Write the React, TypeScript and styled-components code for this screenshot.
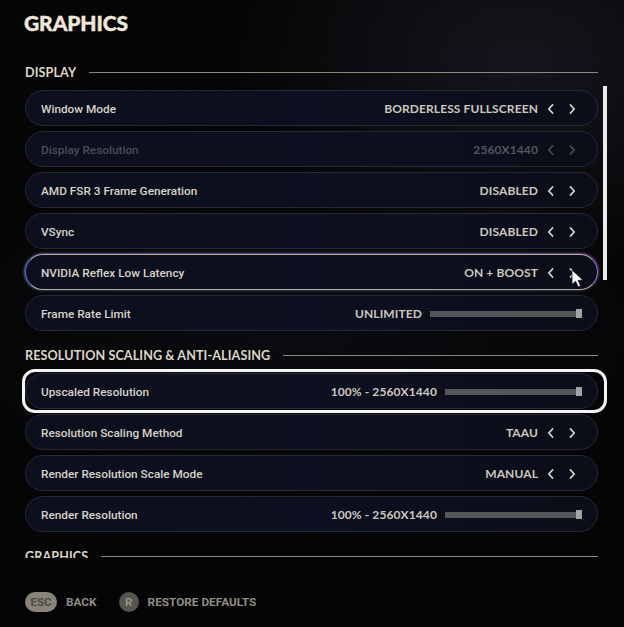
import React from "react";
import styled, { createGlobalStyle, css } from "styled-components";

const Global = createGlobalStyle`
  html, body { margin: 0; padding: 0; background: #050506; }
  * { box-sizing: border-box; }
`;

type RowData = {
  label: string;
  value: string;
  kind: "select" | "slider";
  disabled?: boolean;
  hovered?: boolean;
  focused?: boolean;
  barWidth?: number;
};

type SectionData = { title: string; rows: RowData[] };

const sections: SectionData[] = [
  {
    title: "DISPLAY",
    rows: [
      { label: "Window Mode", value: "BORDERLESS FULLSCREEN", kind: "select" },
      { label: "Display Resolution", value: "2560X1440", kind: "select", disabled: true },
      { label: "AMD FSR 3 Frame Generation", value: "DISABLED", kind: "select" },
      { label: "VSync", value: "DISABLED", kind: "select" },
      { label: "NVIDIA Reflex Low Latency", value: "ON + BOOST", kind: "select", hovered: true },
      { label: "Frame Rate Limit", value: "UNLIMITED", kind: "slider", barWidth: 152 },
    ],
  },
  {
    title: "RESOLUTION SCALING & ANTI-ALIASING",
    rows: [
      { label: "Upscaled Resolution", value: "100% - 2560X1440", kind: "slider", barWidth: 137, focused: true },
      { label: "Resolution Scaling Method", value: "TAAU", kind: "select" },
      { label: "Render Resolution Scale Mode", value: "MANUAL", kind: "select" },
      { label: "Render Resolution", value: "100% - 2560X1440", kind: "slider", barWidth: 137 },
    ],
  },
  { title: "GRAPHICS", rows: [] },
];

const Page = styled.div`
  width: 624px;
  height: 627px;
  overflow: hidden;
  display: flex;
  flex-direction: column;
  background:
    radial-gradient(ellipse 420px 300px at 520px 60px, rgba(34, 36, 46, 0.55), rgba(0, 0, 0, 0) 70%),
    radial-gradient(ellipse 500px 260px at 300px 330px, rgba(22, 24, 34, 0.35), rgba(0, 0, 0, 0) 75%),
    #050506;
`;

const Header = styled.header`
  height: 62px;
  padding: 10px 24px 0;
`;

const Title = styled.h1`
  margin: 0;
  font-family: "Lato", "Inter", sans-serif;
  font-weight: 900;
  font-size: 21px;
  line-height: 26px;
  letter-spacing: -0.1px;
  color: #efe8d8;
  -webkit-text-stroke: 0.4px #efe8d8;
`;

const ScrollArea = styled.div`
  position: relative;
  height: 496px;
  overflow: hidden;
  padding: 0 26px 0 25px;
  display: flex;
  flex-direction: column;
  gap: 14px;
`;

const Scrollbar = styled.div`
  position: absolute;
  left: 603px;
  top: 24px;
  width: 4px;
  height: 194px;
  background: #ececec;
`;

const Section = styled.section`
  display: flex;
  flex-direction: column;
  gap: 8px;
`;

const SectionHeader = styled.div`
  height: 20px;
  display: flex;
  align-items: center;
  gap: 13px;
`;

const SectionTitle = styled.h2`
  margin: 0;
  font-family: "Lato", sans-serif;
  font-weight: 700;
  font-size: 12.6px;
  letter-spacing: 0.1px;
  color: #ddd6c6;
  white-space: nowrap;
`;

const Rule = styled.div`
  flex: 1;
  height: 1px;
  background: #8e887c;
`;

const Rows = styled.div`
  display: flex;
  flex-direction: column;
  gap: 5px;
`;

const Row = styled.div<{ $hovered?: boolean; $focused?: boolean }>`
  position: relative;
  height: 36px;
  border-radius: 18px;
  border: 1px solid #262a37;
  background: linear-gradient(90deg, #0c0f1c 0%, #0d1020 50%, #0b0d18 100%);
  padding: 1px 18px 0 15px;
  display: flex;
  align-items: center;
  gap: 8px;
  ${(p) =>
    p.$hovered &&
    css`
      border: 1.5px solid #b8af9a;
      border-left-color: #6a5ae0;
      border-right-color: #8c7fb0;
      box-shadow:
        -1px 0 2px rgba(70, 210, 255, 0.55),
        1px -1px 2px rgba(190, 70, 255, 0.45),
        0 0 6px rgba(200, 190, 160, 0.15);
    `}
  ${(p) =>
    p.$focused &&
    css`
      &::after {
        content: "";
        position: absolute;
        top: -5px;
        bottom: -5px;
        left: -4px;
        right: -10px;
        border: 3px solid #f4f4f4;
        border-radius: 13px;
        pointer-events: none;
      }
    `}
`;

const Label = styled.span<{ $disabled?: boolean }>`
  flex: 1;
  font-family: "Roboto", sans-serif;
  font-weight: 500;
  font-size: 11.8px;
  letter-spacing: 0;
  color: ${(p) => (p.$disabled ? "#4c4d55" : "#d8d3c8")};
`;

const Value = styled.span<{ $disabled?: boolean }>`
  font-family: "Lato", sans-serif;
  font-weight: 700;
  font-size: 12px;
  letter-spacing: 0.1px;
  color: ${(p) => (p.$disabled ? "#54555d" : "#cdc8be")};
  white-space: nowrap;
`;

const Arrows = styled.div`
  display: flex;
  align-items: center;
  gap: 8px;
  margin-left: -3px;
`;

const ArrowButton = styled.span<{ $disabled?: boolean }>`
  width: 14px;
  height: 14px;
  display: flex;
  align-items: center;
  justify-content: center;
  color: ${(p) => (p.$disabled ? "#4a4b53" : "#dcd7cc")};
`;

const Track = styled.div`
  position: relative;
  height: 6px;
  background: #55565a;
  margin-right: -3px;
`;

const Knob = styled.div`
  position: absolute;
  right: 0;
  top: -1.5px;
  width: 6px;
  height: 9px;
  background: #a3a3a3;
`;

const Cursor = styled.svg`
  position: absolute;
  left: 545px;
  top: 14px;
  width: 14px;
  height: 19px;
`;

const Footer = styled.footer`
  padding: 34px 25px 0;
  display: flex;
  align-items: center;
  gap: 22px;
`;

const Hint = styled.div`
  display: flex;
  align-items: center;
  gap: 9px;
`;

const KeyCap = styled.span<{ $round?: boolean }>`
  height: 20px;
  min-width: ${(p) => (p.$round ? "20px" : "32px")};
  padding: 0 ${(p) => (p.$round ? "0" : "5px")};
  border-radius: 10px;
  display: inline-flex;
  align-items: center;
  justify-content: center;
  font-family: "Roboto", sans-serif;
  font-weight: 700;
  font-size: 11.5px;
  background: ${(p) => (p.$round ? "#57544f" : "#87827a")};
  color: ${(p) => (p.$round ? "#96918a" : "#4f4c47")};
`;

const HintText = styled.span`
  font-family: "Roboto", sans-serif;
  font-weight: 700;
  font-size: 11.8px;
  letter-spacing: 0;
  color: #8f8b84;
`;

const Chevron = ({ dir }: { dir: "left" | "right" }) => (
  <svg width="7" height="10" viewBox="0 0 7 10">
    <path
      d={dir === "left" ? "M5.5 1 L1.8 5 L5.5 9" : "M1.5 1 L5.2 5 L1.5 9"}
      fill="none"
      stroke="currentColor"
      strokeWidth="1.8"
      strokeLinecap="round"
      strokeLinejoin="round"
    />
  </svg>
);

const SettingRow = ({ row }: { row: RowData }) => (
  <Row $hovered={row.hovered} $focused={row.focused}>
    <Label $disabled={row.disabled}>{row.label}</Label>
    <Value $disabled={row.disabled}>{row.value}</Value>
    {row.kind === "select" ? (
      <Arrows>
        <ArrowButton $disabled={row.disabled}>
          <Chevron dir="left" />
        </ArrowButton>
        <ArrowButton $disabled={row.disabled}>
          <Chevron dir="right" />
        </ArrowButton>
      </Arrows>
    ) : (
      <Track style={{ width: row.barWidth }}>
        <Knob />
      </Track>
    )}
    {row.hovered && (
      <Cursor viewBox="0 0 14 19">
        <path
          d="M1 1 L1 15.5 L4.6 12.2 L7.2 18 L9.6 17 L7.1 11.3 L12 11.2 Z"
          fill="#ffffff"
          stroke="#111"
          strokeWidth="0.8"
          strokeLinejoin="round"
        />
      </Cursor>
    )}
  </Row>
);

export default function App() {
  return (
    <>
      <Global />
      <Page>
        <Header>
          <Title>GRAPHICS</Title>
        </Header>
        <ScrollArea>
          {sections.map((s) => (
            <Section key={s.title}>
              <SectionHeader>
                <SectionTitle>{s.title}</SectionTitle>
                <Rule />
              </SectionHeader>
              {s.rows.length > 0 && (
                <Rows>
                  {s.rows.map((r) => (
                    <SettingRow key={r.label} row={r} />
                  ))}
                </Rows>
              )}
            </Section>
          ))}
          <Scrollbar />
        </ScrollArea>
        <Footer>
          <Hint>
            <KeyCap>ESC</KeyCap>
            <HintText>BACK</HintText>
          </Hint>
          <Hint>
            <KeyCap $round>R</KeyCap>
            <HintText>RESTORE DEFAULTS</HintText>
          </Hint>
        </Footer>
      </Page>
    </>
  );
}
